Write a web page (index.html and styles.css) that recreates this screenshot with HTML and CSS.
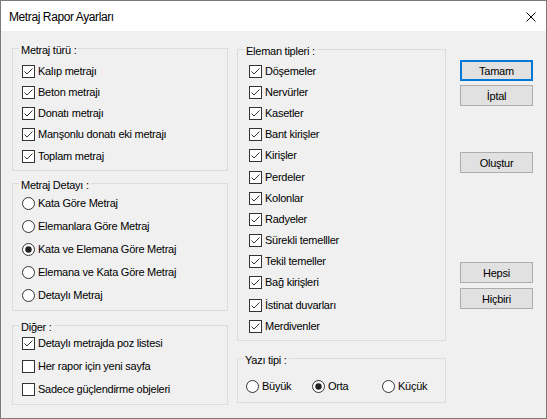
FILE: index.html
```html
<!DOCTYPE html>
<html lang="tr">
<head>
<meta charset="utf-8">
<title>Metraj Rapor Ayarları</title>
<link rel="stylesheet" href="styles.css">
</head>
<body>
<svg class="defs" aria-hidden="true">
  <symbol id="chk" viewBox="0 0 13 13">
    <rect x="0.5" y="0.5" width="12" height="12" fill="#fff" stroke="#333"/>
    <path d="M2.5 6.5 L5 9 L10.5 3.5" fill="none" stroke="#333" stroke-width="1"/>
  </symbol>
  <symbol id="unchk" viewBox="0 0 13 13">
    <rect x="0.5" y="0.5" width="12" height="12" fill="#fff" stroke="#333"/>
  </symbol>
  <symbol id="rad" viewBox="0 0 13 13">
    <circle cx="6.5" cy="6.5" r="6" fill="#fff" stroke="#333"/>
  </symbol>
  <symbol id="radon" viewBox="0 0 13 13">
    <circle cx="6.5" cy="6.5" r="6" fill="#fff" stroke="#333"/>
    <circle cx="6.5" cy="6.5" r="3.2" fill="#222"/>
  </symbol>
</svg>
<div class="window">
  <div class="titlebar">
    <span class="title">Metraj Rapor Ayarları</span>
    <svg class="close" viewBox="0 0 10 10"><path d="M0.5 0.5 L9.5 9.5 M9.5 0.5 L0.5 9.5" stroke="#000" stroke-width="1" fill="none"/></svg>
  </div>
  <div class="body">
    <div class="col-left">
      <fieldset class="group g-type">
        <legend>Metraj türü :</legend>
        <label class="row"><svg class="ic"><use href="#chk"/></svg><span>Kalıp metrajı</span></label>
        <label class="row"><svg class="ic"><use href="#chk"/></svg><span>Beton metrajı</span></label>
        <label class="row"><svg class="ic"><use href="#chk"/></svg><span>Donatı metrajı</span></label>
        <label class="row"><svg class="ic"><use href="#chk"/></svg><span>Manşonlu donatı eki metrajı</span></label>
        <label class="row"><svg class="ic"><use href="#chk"/></svg><span>Toplam metraj</span></label>
      </fieldset>
      <fieldset class="group g-detail">
        <legend>Metraj Detayı :</legend>
        <label class="row"><svg class="ic"><use href="#rad"/></svg><span>Kata Göre Metraj</span></label>
        <label class="row"><svg class="ic"><use href="#rad"/></svg><span>Elemanlara Göre Metraj</span></label>
        <label class="row"><svg class="ic"><use href="#radon"/></svg><span>Kata ve Elemana Göre Metraj</span></label>
        <label class="row"><svg class="ic"><use href="#rad"/></svg><span>Elemana ve Kata Göre Metraj</span></label>
        <label class="row"><svg class="ic"><use href="#rad"/></svg><span>Detaylı Metraj</span></label>
      </fieldset>
      <fieldset class="group g-other">
        <legend>Diğer :</legend>
        <label class="row first"><svg class="ic"><use href="#chk"/></svg><span>Detaylı metrajda poz listesi</span></label>
        <label class="row"><svg class="ic"><use href="#unchk"/></svg><span>Her rapor için yeni sayfa</span></label>
        <label class="row"><svg class="ic"><use href="#unchk"/></svg><span>Sadece güçlendirme objeleri</span></label>
      </fieldset>
    </div>
    <div class="col-mid">
      <fieldset class="group g-el">
        <legend>Eleman tipleri :</legend>
        <label class="row"><svg class="ic"><use href="#chk"/></svg><span>Döşemeler</span></label>
        <label class="row"><svg class="ic"><use href="#chk"/></svg><span>Nervürler</span></label>
        <label class="row"><svg class="ic"><use href="#chk"/></svg><span>Kasetler</span></label>
        <label class="row"><svg class="ic"><use href="#chk"/></svg><span>Bant kirişler</span></label>
        <label class="row"><svg class="ic"><use href="#chk"/></svg><span>Kirişler</span></label>
        <label class="row"><svg class="ic"><use href="#chk"/></svg><span>Perdeler</span></label>
        <label class="row"><svg class="ic"><use href="#chk"/></svg><span>Kolonlar</span></label>
        <label class="row"><svg class="ic"><use href="#chk"/></svg><span>Radyeler</span></label>
        <label class="row"><svg class="ic"><use href="#chk"/></svg><span>Sürekli temelller</span></label>
        <label class="row"><svg class="ic"><use href="#chk"/></svg><span>Tekil temeller</span></label>
        <label class="row"><svg class="ic"><use href="#chk"/></svg><span>Bağ kirişleri</span></label>
        <label class="row gap"><svg class="ic"><use href="#chk"/></svg><span>İstinat duvarları</span></label>
        <label class="row"><svg class="ic"><use href="#chk"/></svg><span>Merdivenler</span></label>
      </fieldset>
      <fieldset class="group g-font">
        <legend>Yazı tipi :</legend>
        <div class="radio-row">
          <label class="opt opt-1"><svg class="ic"><use href="#rad"/></svg><span>Büyük</span></label>
          <label class="opt opt-2"><svg class="ic"><use href="#radon"/></svg><span>Orta</span></label>
          <label class="opt"><svg class="ic"><use href="#rad"/></svg><span>Küçük</span></label>
        </div>
      </fieldset>
    </div>
    <div class="col-btns">
      <button class="btn default">Tamam</button>
      <button class="btn b-cancel">İptal</button>
      <button class="btn b-create">Oluştur</button>
      <button class="btn b-all">Hepsi</button>
      <button class="btn b-none">Hiçbiri</button>
    </div>
  </div>
</div>
</body>
</html>
```
FILE: styles.css
```css
html, body {
  margin: 0;
  padding: 0;
  background: #ffffff;
}

.defs {
  display: block;
  width: 0;
  height: 0;
  overflow: hidden;
  position: absolute;
}

.window {
  width: 547px;
  height: 419px;
  box-sizing: border-box;
  border: 1px solid #7a7a7a;
  background: #f0f0f0;
  display: flex;
  flex-direction: column;
  font-family: "Liberation Sans", Arial, sans-serif;
  font-size: 11px;
  letter-spacing: -0.25px;
  color: #000;
}

.titlebar {
  flex: none;
  height: 30px;
  background: #ffffff;
  display: flex;
  align-items: center;
  padding-left: 8px;
}

.title {
  font-family: "Liberation Sans", Arial, sans-serif;
  font-size: 12px;
  letter-spacing: -0.4px;
  line-height: 16px;
  padding-top: 1px;
}

.close {
  margin-left: auto;
  margin-right: 10px;
  width: 10px;
  height: 10px;
  margin-top: 1px;
}

.body {
  flex: 1;
  display: flex;
  padding: 9px 13px 0 11px;
}

.col-left {
  width: 216px;
  margin-right: 9px;
  display: flex;
  flex-direction: column;
}

.col-mid {
  width: 209px;
  margin-right: 14px;
  display: flex;
  flex-direction: column;
}

.col-btns {
  width: 73px;
  padding-top: 20px;
  display: flex;
  flex-direction: column;
}

.group {
  margin: 0;
  min-width: 0;
  border: 1px solid #dcdcdc;
  padding: 3.5px 0 3.5px 9px;
  box-sizing: border-box;
}

.group legend {
  padding: 4px 2px 0;
  margin-left: -3px;
  line-height: 13px;
  white-space: nowrap;
}

.row {
  display: flex;
  align-items: center;
  height: 21.25px;
}

.ic {
  width: 13px;
  height: 13px;
  flex: none;
  margin-right: 3px;
}

.row span,
.opt span {
  line-height: 13px;
  white-space: nowrap;
}

.g-detail {
  margin-top: 4px;
  padding-top: 0;
  padding-bottom: 3px;
}

.g-detail .row {
  height: 22.9px;
}

.g-other {
  margin-top: 6px;
  padding-top: 0;
  padding-bottom: 2px;
}

.g-other .row {
  height: 23.3px;
}

.g-other .row.first {
  margin-top: -2px;
}

.g-el {
  margin-top: 1px;
  padding: 2.5px 0 3px 11px;
}

.g-el legend {
  margin-left: -5px;
}

.g-el .row {
  height: 21.2px;
}

.g-el .row.gap {
  margin-top: 1.5px;
}

.g-font {
  margin-top: 8.4px;
  padding: 8.2px 0 4px 8px;
}

.radio-row {
  display: flex;
  align-items: center;
  height: 23px;
}

.opt {
  display: flex;
  align-items: center;
}

.opt-1 {
  width: 66px;
}

.opt-2 {
  width: 70px;
}

.btn {
  height: 21px;
  box-sizing: border-box;
  border: 1px solid #adadad;
  background: #e1e1e1;
  padding: 0;
  margin: 0;
  font-family: "Liberation Sans", Arial, sans-serif;
  font-size: 11px;
  letter-spacing: -0.25px;
  color: #000;
  display: flex;
  align-items: center;
  justify-content: center;
}

.btn.default {
  border: 2px solid #0078d7;
}

.b-cancel {
  margin-top: 4px;
}

.b-create {
  margin-top: 46px;
}

.b-all {
  margin-top: 89px;
}

.b-none {
  margin-top: 5px;
}
```
